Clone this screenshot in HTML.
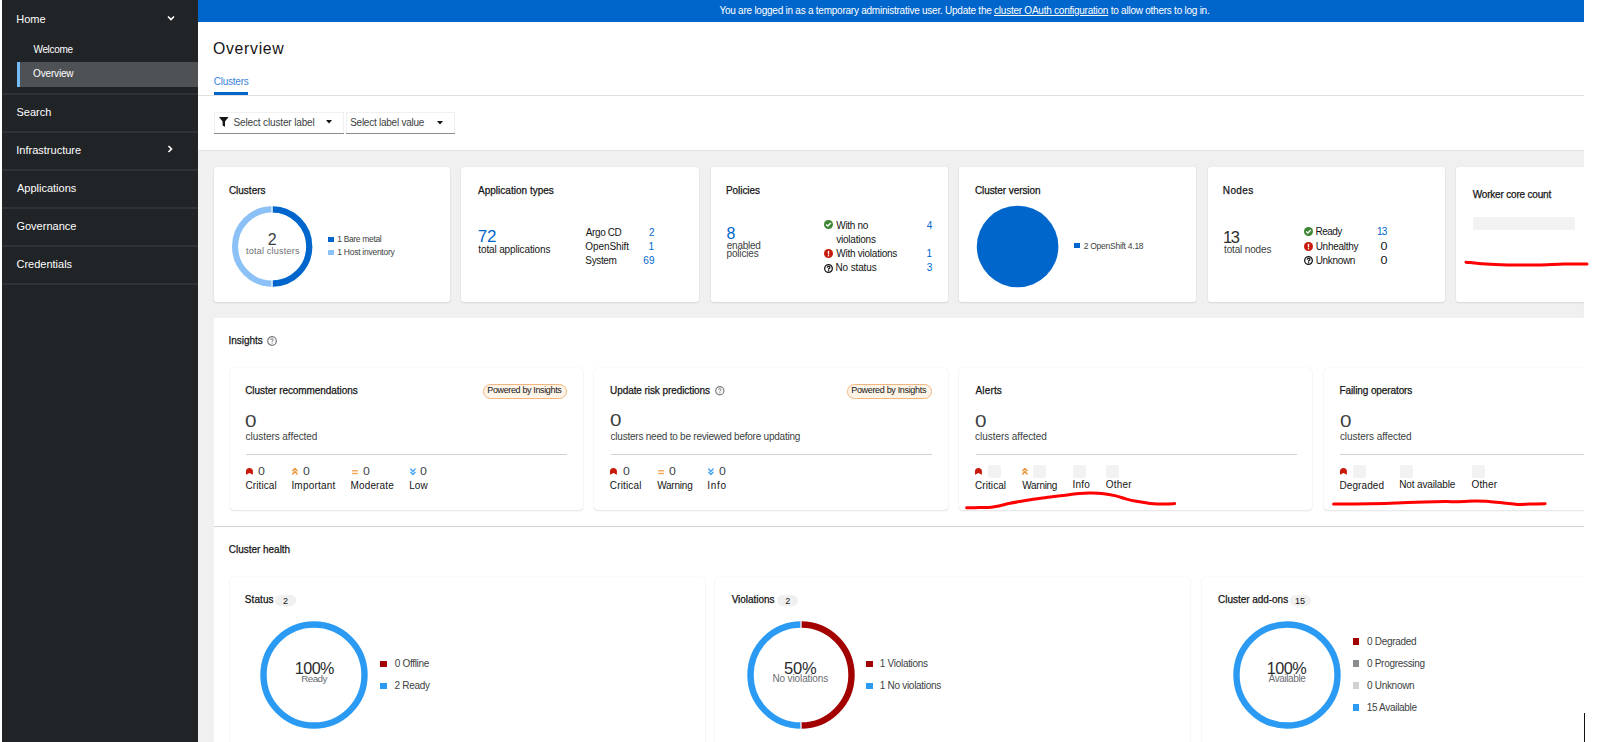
<!DOCTYPE html>
<html><head><meta charset="utf-8">
<style>
*{box-sizing:border-box;margin:0;padding:0}
html,body{width:1598px;height:742px;overflow:hidden;background:#fff}
body{position:relative;font-family:"Liberation Sans",sans-serif;color:#151515}
.a{position:absolute}
.t{position:absolute;white-space:nowrap;line-height:20px}
</style></head><body>
<div class="a" style="left:2px;top:0px;width:196.00px;height:742.00px;background:#212427;"></div>
<div class="a" style="left:17px;top:62px;width:181.00px;height:25.40px;background:#4f5255;"></div>
<div class="a" style="left:17px;top:62px;width:3.00px;height:25.40px;background:#73bcf7;"></div>
<div class="a" style="left:2px;top:92.5px;width:196.00px;height:2.00px;background:#2e3135;"></div>
<div class="a" style="left:2px;top:130.5px;width:196.00px;height:2.00px;background:#2e3135;"></div>
<div class="a" style="left:2px;top:168.5px;width:196.00px;height:2.00px;background:#2e3135;"></div>
<div class="a" style="left:2px;top:206.5px;width:196.00px;height:2.00px;background:#2e3135;"></div>
<div class="a" style="left:2px;top:244.5px;width:196.00px;height:2.00px;background:#2e3135;"></div>
<div class="a" style="left:2px;top:282.5px;width:196.00px;height:2.00px;background:#2e3135;"></div>
<div class="t" style="left:16.30px;top:9.29px;font-size:11px;letter-spacing:0.000px;color:#fff;">Home</div>
<svg class="a" style="left:166.5px;top:15px" width="8" height="7" viewBox="0 0 8 7"><path d="M1 1.5 L4 4.5 L7 1.5" stroke="#fff" stroke-width="1.6" fill="none"/></svg>
<div class="t" style="left:33.45px;top:40.04px;font-size:10px;letter-spacing:-0.317px;color:#fff;">Welcome</div>
<div class="t" style="left:33.05px;top:64.14px;font-size:10px;letter-spacing:-0.164px;color:#fff;">Overview</div>
<div class="t" style="left:16.50px;top:102.19px;font-size:11px;letter-spacing:0.000px;color:#fff;">Search</div>
<div class="t" style="left:16.30px;top:139.89px;font-size:11px;letter-spacing:0.000px;color:#fff;">Infrastructure</div>
<svg class="a" style="left:167px;top:145px" width="7" height="8" viewBox="0 0 7 8"><path d="M1.5 1 L4.5 4 L1.5 7" stroke="#fff" stroke-width="1.6" fill="none"/></svg>
<div class="t" style="left:16.95px;top:177.79px;font-size:11px;letter-spacing:0.000px;color:#fff;">Applications</div>
<div class="t" style="left:16.45px;top:215.99px;font-size:11px;letter-spacing:0.000px;color:#fff;">Governance</div>
<div class="t" style="left:16.45px;top:253.59px;font-size:11px;letter-spacing:0.000px;color:#fff;">Credentials</div>
<div class="a" style="left:198px;top:0px;width:1386.00px;height:21.50px;background:#0066cc;"></div>
<div class="t" style="left:719.45px;top:0.74px;font-size:10px;letter-spacing:-0.242px;color:#fff;">You are logged in as a temporary administrative user. Update the <u>cluster OAuth configuration</u> to allow others to log in.</div>
<div class="t" style="left:213.05px;top:39.03px;font-size:15.8px;letter-spacing:0.693px;color:#151515;">Overview</div>
<div class="t" style="left:213.70px;top:71.84px;font-size:10px;letter-spacing:-0.221px;color:#3b82dc;">Clusters</div>
<div class="a" style="left:214px;top:92.4px;width:34.00px;height:2.40px;background:#0066cc;"></div>
<div class="a" style="left:198px;top:94.8px;width:1386.00px;height:1.20px;background:#e0e0e0;"></div>
<div class="a" style="left:214px;top:112px;width:130.40px;height:21.00px;background:#fff;box-shadow:inset 0 1px 0 #f0f0f0,inset 1px 0 0 #f0f0f0,inset -1px 0 0 #f0f0f0"></div>
<div class="a" style="left:214px;top:133px;width:130.40px;height:1.00px;background:#8a8d90;"></div>
<div class="a" style="left:345.5px;top:112px;width:109.20px;height:21.00px;background:#fff;box-shadow:inset 0 1px 0 #f0f0f0,inset 1px 0 0 #f0f0f0,inset -1px 0 0 #f0f0f0"></div>
<div class="a" style="left:345.5px;top:133px;width:109.20px;height:1.00px;background:#8a8d90;"></div>
<svg class="a" style="left:219px;top:117px" width="10" height="10" viewBox="0 0 10 10"><path d="M0 0 H9.6 L6 4.6 V9.8 L3.6 8.6 V4.6 Z" fill="#151515"/></svg>
<div class="t" style="left:233.55px;top:112.94px;font-size:10px;letter-spacing:-0.147px;color:#3c3f42;">Select cluster label</div>
<svg class="a" style="left:326px;top:120.2px" width="6" height="4" viewBox="0 0 6 4"><path d="M0 0 H6 L3 3.6 Z" fill="#151515"/></svg>
<div class="t" style="left:350.15px;top:112.94px;font-size:10px;letter-spacing:-0.244px;color:#3c3f42;">Select label value</div>
<svg class="a" style="left:437.2px;top:120.5px" width="6" height="4" viewBox="0 0 6 4"><path d="M0 0 H6 L3 3.6 Z" fill="#151515"/></svg>
<div class="a" style="left:198px;top:150.2px;width:1386.00px;height:591.80px;background:#f0f0f0;box-shadow:inset 0 1px 1px rgba(0,0,0,.05)"></div>
<div class="a" style="left:214px;top:167px;width:236.40px;height:135.00px;background:#fff;border-radius:3px;box-shadow:0 1px 2px rgba(3,3,3,.10),0 0 2px rgba(3,3,3,.06)"></div>
<div class="a" style="left:461.2px;top:167px;width:237.80px;height:135.00px;background:#fff;border-radius:3px;box-shadow:0 1px 2px rgba(3,3,3,.10),0 0 2px rgba(3,3,3,.06)"></div>
<div class="a" style="left:710.7px;top:167px;width:237.10px;height:135.00px;background:#fff;border-radius:3px;box-shadow:0 1px 2px rgba(3,3,3,.10),0 0 2px rgba(3,3,3,.06)"></div>
<div class="a" style="left:959px;top:167px;width:237.00px;height:135.00px;background:#fff;border-radius:3px;box-shadow:0 1px 2px rgba(3,3,3,.10),0 0 2px rgba(3,3,3,.06)"></div>
<div class="a" style="left:1207.5px;top:167px;width:237.50px;height:135.00px;background:#fff;border-radius:3px;box-shadow:0 1px 2px rgba(3,3,3,.10),0 0 2px rgba(3,3,3,.06)"></div>
<div class="a" style="left:1456px;top:167px;width:244.00px;height:135.00px;background:#fff;border-radius:3px;box-shadow:0 1px 2px rgba(3,3,3,.10),0 0 2px rgba(3,3,3,.06)"></div>
<div class="t" style="left:228.90px;top:180.63px;font-size:10px;letter-spacing:-0.007px;color:#151515;-webkit-text-stroke:0.25px currentColor;">Clusters</div>
<svg class="a" style="left:231px;top:205px" width="82" height="84" viewBox="231 205 82 84"><circle cx="272.15" cy="246.5" r="37.1" fill="none" stroke="#8bc1f7" stroke-width="6.1"/><path d="M272.15 209.4 A37.1 37.1 0 0 1 272.15 283.6" fill="none" stroke="#0066cc" stroke-width="6.1"/><rect x="271.5" y="205" width="1.2" height="84" fill="#fff"/></svg>
<div class="t" style="left:267.75px;top:230.36px;font-size:16px;letter-spacing:0.000px;color:#3c3f42;">2</div>
<div class="t" style="left:246.05px;top:241.48px;font-size:9px;letter-spacing:0.219px;color:#6a6e73;">total clusters</div>
<div class="a" style="left:328.1px;top:236.5px;width:5.50px;height:5.50px;background:#0066cc;"></div>
<div class="a" style="left:328.1px;top:249.5px;width:5.50px;height:5.30px;background:#8bc1f7;"></div>
<div class="t" style="left:337.25px;top:229.25px;font-size:8.5px;letter-spacing:-0.341px;color:#3c3f42;">1 Bare metal</div>
<div class="t" style="left:337.25px;top:242.25px;font-size:8.5px;letter-spacing:-0.263px;color:#3c3f42;">1 Host inventory</div>
<div class="t" style="left:478.00px;top:180.63px;font-size:10px;letter-spacing:0.016px;color:#151515;-webkit-text-stroke:0.25px currentColor;">Application types</div>
<div class="t" style="left:477.65px;top:227.31px;font-size:17px;letter-spacing:-0.000px;color:#0066cc;">72</div>
<div class="t" style="left:478.35px;top:240.44px;font-size:10px;letter-spacing:-0.141px;color:#151515;">total applications</div>
<div class="t" style="left:585.80px;top:222.53px;font-size:10px;letter-spacing:-0.408px;color:#151515;">Argo CD</div>
<div class="t" style="left:585.35px;top:236.74px;font-size:10px;letter-spacing:-0.094px;color:#151515;">OpenShift</div>
<div class="t" style="left:585.35px;top:250.94px;font-size:10px;letter-spacing:-0.370px;color:#151515;">System</div>
<div class="t" style="left:648.95px;top:222.53px;font-size:10px;letter-spacing:0.000px;color:#0066cc;">2</div>
<div class="t" style="left:648.40px;top:236.74px;font-size:10px;letter-spacing:0.000px;color:#0066cc;">1</div>
<div class="t" style="left:643.35px;top:250.94px;font-size:10px;letter-spacing:0.000px;color:#0066cc;">69</div>
<div class="t" style="left:725.90px;top:180.63px;font-size:10px;letter-spacing:-0.043px;color:#151515;-webkit-text-stroke:0.25px currentColor;">Policies</div>
<div class="t" style="left:726.50px;top:223.66px;font-size:16px;letter-spacing:0.000px;color:#0066cc;">8</div>
<div class="t" style="left:726.80px;top:235.94px;font-size:10px;letter-spacing:-0.258px;color:#3c3f42;">enabled</div>
<div class="t" style="left:726.55px;top:244.44px;font-size:10px;letter-spacing:-0.179px;color:#3c3f42;">policies</div>
<svg class="a" style="left:823.9px;top:220.3px" width="9" height="9" viewBox="0 0 9 9"><circle cx="4.5" cy="4.5" r="4.5" fill="#3e8635"/><path d="M2.2 4.6 L3.8 6.1 L6.8 3.0" stroke="#fff" stroke-width="1.4" fill="none"/></svg>
<svg class="a" style="left:823.9px;top:249.2px" width="9" height="9" viewBox="0 0 9 9"><circle cx="4.5" cy="4.5" r="4.5" fill="#c9190b"/><rect x="3.85" y="1.7" width="1.3" height="3.7" rx=".5" fill="#fff"/><rect x="3.85" y="6.1" width="1.3" height="1.3" fill="#fff"/></svg>
<svg class="a" style="left:823.9px;top:263.7px" width="9" height="9" viewBox="0 0 9 9"><circle cx="4.5" cy="4.5" r="3.85" fill="none" stroke="#151515" stroke-width="1.3"/><path d="M3.1 3.7 Q3.2 2.3 4.5 2.3 Q5.9 2.3 5.9 3.5 Q5.9 4.4 4.6 4.9 V5.7" stroke="#151515" stroke-width="1.2" fill="none"/><rect x="3.95" y="6.1" width="1.2" height="1.2" fill="#151515"/></svg>
<div class="t" style="left:836.25px;top:216.24px;font-size:10px;letter-spacing:-0.292px;color:#151515;">With no</div>
<div class="t" style="left:836.25px;top:229.74px;font-size:10px;letter-spacing:-0.222px;color:#151515;">violations</div>
<div class="t" style="left:836.25px;top:244.44px;font-size:10px;letter-spacing:-0.246px;color:#151515;">With violations</div>
<div class="t" style="left:835.50px;top:258.24px;font-size:10px;letter-spacing:-0.138px;color:#151515;">No status</div>
<div class="t" style="left:926.75px;top:216.24px;font-size:10px;letter-spacing:0.000px;color:#0066cc;">4</div>
<div class="t" style="left:926.40px;top:244.44px;font-size:10px;letter-spacing:0.000px;color:#0066cc;">1</div>
<div class="t" style="left:926.85px;top:258.24px;font-size:10px;letter-spacing:0.000px;color:#0066cc;">3</div>
<div class="t" style="left:974.90px;top:180.63px;font-size:10px;letter-spacing:-0.075px;color:#151515;-webkit-text-stroke:0.25px currentColor;">Cluster version</div>
<svg class="a" style="left:976px;top:205px" width="84" height="84" viewBox="976 205 84 84"><circle cx="1017.6" cy="246.5" r="40.8" fill="#0066cc"/></svg>
<div class="a" style="left:1074.1px;top:242.5px;width:5.60px;height:5.60px;background:#0066cc;"></div>
<div class="t" style="left:1083.70px;top:235.55px;font-size:8.5px;letter-spacing:-0.260px;color:#3c3f42;">2 OpenShift 4.18</div>
<div class="t" style="left:1222.80px;top:180.63px;font-size:10px;letter-spacing:0.363px;color:#151515;-webkit-text-stroke:0.25px currentColor;">Nodes</div>
<div class="t" style="left:1222.95px;top:226.98px;font-size:16.5px;letter-spacing:0.000px;color:#2a2c2e;letter-spacing:-1.4px">13</div>
<div class="t" style="left:1224.05px;top:240.13px;font-size:10px;letter-spacing:-0.155px;color:#3c3f42;">total nodes</div>
<svg class="a" style="left:1304px;top:227.3px" width="9" height="9" viewBox="0 0 9 9"><circle cx="4.5" cy="4.5" r="4.5" fill="#3e8635"/><path d="M2.2 4.6 L3.8 6.1 L6.8 3.0" stroke="#fff" stroke-width="1.4" fill="none"/></svg>
<svg class="a" style="left:1304px;top:242px" width="9" height="9" viewBox="0 0 9 9"><circle cx="4.5" cy="4.5" r="4.5" fill="#c9190b"/><rect x="3.85" y="1.7" width="1.3" height="3.7" rx=".5" fill="#fff"/><rect x="3.85" y="6.1" width="1.3" height="1.3" fill="#fff"/></svg>
<svg class="a" style="left:1304px;top:256.3px" width="9" height="9" viewBox="0 0 9 9"><circle cx="4.5" cy="4.5" r="3.85" fill="none" stroke="#151515" stroke-width="1.3"/><path d="M3.1 3.7 Q3.2 2.3 4.5 2.3 Q5.9 2.3 5.9 3.5 Q5.9 4.4 4.6 4.9 V5.7" stroke="#151515" stroke-width="1.2" fill="none"/><rect x="3.95" y="6.1" width="1.2" height="1.2" fill="#151515"/></svg>
<div class="t" style="left:1315.60px;top:222.13px;font-size:10px;letter-spacing:-0.550px;color:#151515;">Ready</div>
<div class="t" style="left:1315.65px;top:236.74px;font-size:10px;letter-spacing:-0.263px;color:#151515;">Unhealthy</div>
<div class="t" style="left:1315.65px;top:251.13px;font-size:10px;letter-spacing:-0.333px;color:#151515;">Unknown</div>
<div class="t" style="left:1376.90px;top:222.13px;font-size:10px;letter-spacing:0.000px;color:#0066cc;letter-spacing:-0.8px">13</div>
<div class="t" style="left:1381.60px;top:236.74px;font-size:10px;letter-spacing:0.000px;color:#151515;transform:scaleX(1.25);transform-origin:100% 0;">0</div>
<div class="t" style="left:1381.60px;top:251.13px;font-size:10px;letter-spacing:0.000px;color:#151515;transform:scaleX(1.25);transform-origin:100% 0;">0</div>
<div class="t" style="left:1472.75px;top:184.63px;font-size:10px;letter-spacing:-0.194px;color:#151515;-webkit-text-stroke:0.25px currentColor;">Worker core count</div>
<div class="a" style="left:1472.8px;top:216.7px;width:102.10px;height:13.80px;background:#f2f2f2;border-radius:2px"></div>
<div class="a" style="left:213.5px;top:318px;width:1370.50px;height:424.00px;background:#fff;"></div>
<div class="t" style="left:228.40px;top:331.44px;font-size:10px;letter-spacing:-0.000px;color:#151515;-webkit-text-stroke:0.25px currentColor;">Insights</div>
<svg class="a" style="left:267.3px;top:336px" width="10" height="10" viewBox="0 0 10 10"><circle cx="5" cy="5" r="4.3" fill="none" stroke="#7a7d81" stroke-width="1.2"/><path d="M3.7 4 Q3.7 2.7 5 2.7 Q6.3 2.7 6.3 3.8 Q6.3 4.6 5.1 5.1 V5.8" stroke="#7a7d81" stroke-width="1" fill="none"/><rect x="4.55" y="6.5" width="1.1" height="1.1" fill="#7a7d81"/></svg>
<div class="a" style="left:230px;top:367.5px;width:352.80px;height:142.50px;background:#fff;border-radius:4px;box-shadow:0 1px 2px rgba(3,3,3,.10),0 0 1.5px rgba(3,3,3,.08)"></div>
<div class="a" style="left:594px;top:367.5px;width:353.50px;height:142.50px;background:#fff;border-radius:4px;box-shadow:0 1px 2px rgba(3,3,3,.10),0 0 1.5px rgba(3,3,3,.08)"></div>
<div class="a" style="left:959px;top:367.5px;width:353.30px;height:142.50px;background:#fff;border-radius:4px;box-shadow:0 1px 2px rgba(3,3,3,.10),0 0 1.5px rgba(3,3,3,.08)"></div>
<div class="a" style="left:1324px;top:367.5px;width:376.00px;height:142.50px;background:#fff;border-radius:4px;box-shadow:0 1px 2px rgba(3,3,3,.10),0 0 1.5px rgba(3,3,3,.08)"></div>
<div class="t" style="left:245.20px;top:381.44px;font-size:10px;letter-spacing:-0.064px;color:#151515;-webkit-text-stroke:0.25px currentColor;">Cluster recommendations</div>
<div class="a" style="left:483px;top:383.9px;width:84.4px;height:15px;border:1px solid #f4c145;border-color:#f3b57e;background:#fff4e8;border-radius:8px"></div>
<div class="t" style="left:487.25px;top:380.48px;font-size:9px;letter-spacing:-0.361px;color:#151515;">Powered by Insights</div>
<div class="t" style="left:245.35px;top:410.68px;font-size:16.5px;letter-spacing:0.000px;color:#3c3f42;transform:scaleX(1.25);transform-origin:0 0;">0</div>
<div class="t" style="left:245.60px;top:427.33px;font-size:10px;letter-spacing:-0.053px;color:#3c3f42;">clusters affected</div>
<div class="a" style="left:246px;top:454px;width:321.40px;height:1.00px;background:#d2d2d2;"></div>
<svg class="a" style="left:246px;top:468.1px" width="7" height="7" viewBox="0 0 7 7"><path d="M0 6.8 V3 Q0.2 0.4 3.4 0 Q6.8 0.4 6.9 3 V6.8 L3.45 5.1 Z" fill="#c9190b"/></svg>
<svg class="a" style="left:292.3px;top:467px" width="6" height="8" viewBox="0 0 6 8"><path d="M0.75 3.7 L2.9 1.4 L5.05 3.7 M0.75 6.9 L2.9 4.6 L5.05 6.9" stroke="#ef9234" stroke-width="1.45" fill="none" stroke-linecap="round" stroke-linejoin="round"/></svg>
<svg class="a" style="left:352px;top:469.5px" width="6" height="5" viewBox="0 0 6 5"><rect x="0" y="0" width="6" height="1.6" rx=".4" fill="#f4ae62"/><rect x="0" y="2.7" width="6" height="1.6" rx=".4" fill="#f4ae62"/></svg>
<svg class="a" style="left:410px;top:467.6px" width="6" height="8" viewBox="0 0 6 8"><path d="M0.75 1.1 L2.9 3.4 L5.05 1.1 M0.75 4.3 L2.9 6.6 L5.05 4.3" stroke="#4aa6f4" stroke-width="1.45" fill="none" stroke-linecap="round" stroke-linejoin="round"/></svg>
<div class="t" style="left:257.50px;top:461.49px;font-size:11px;letter-spacing:0.000px;color:#3c3f42;transform:scaleX(1.12);transform-origin:0 0;">0</div>
<div class="t" style="left:303.40px;top:461.49px;font-size:11px;letter-spacing:0.000px;color:#3c3f42;transform:scaleX(1.12);transform-origin:0 0;">0</div>
<div class="t" style="left:363.30px;top:461.49px;font-size:11px;letter-spacing:0.000px;color:#3c3f42;transform:scaleX(1.12);transform-origin:0 0;">0</div>
<div class="t" style="left:420.20px;top:461.49px;font-size:11px;letter-spacing:0.000px;color:#3c3f42;transform:scaleX(1.12);transform-origin:0 0;">0</div>
<div class="t" style="left:245.50px;top:475.94px;font-size:10px;letter-spacing:0.086px;color:#151515;">Critical</div>
<div class="t" style="left:291.40px;top:475.94px;font-size:10px;letter-spacing:0.194px;color:#151515;">Important</div>
<div class="t" style="left:350.60px;top:475.94px;font-size:10px;letter-spacing:0.129px;color:#151515;">Moderate</div>
<div class="t" style="left:409.20px;top:475.94px;font-size:10px;letter-spacing:0.075px;color:#151515;">Low</div>
<div class="t" style="left:610.05px;top:381.44px;font-size:10px;letter-spacing:-0.077px;color:#151515;-webkit-text-stroke:0.25px currentColor;">Update risk predictions</div>
<svg class="a" style="left:715.4px;top:386.2px" width="9.6" height="9.6" viewBox="0 0 10 10"><circle cx="5" cy="5" r="4.3" fill="none" stroke="#7a7d81" stroke-width="1.2"/><path d="M3.7 4 Q3.7 2.7 5 2.7 Q6.3 2.7 6.3 3.8 Q6.3 4.6 5.1 5.1 V5.8" stroke="#7a7d81" stroke-width="1" fill="none"/><rect x="4.55" y="6.5" width="1.1" height="1.1" fill="#7a7d81"/></svg>
<div class="a" style="left:847px;top:383.9px;width:85.0px;height:15px;border:1px solid #f4c145;border-color:#f3b57e;background:#fff4e8;border-radius:8px"></div>
<div class="t" style="left:851.25px;top:380.48px;font-size:9px;letter-spacing:-0.328px;color:#151515;">Powered by Insights</div>
<div class="t" style="left:610.35px;top:409.98px;font-size:16.5px;letter-spacing:0.000px;color:#3c3f42;transform:scaleX(1.25);transform-origin:0 0;">0</div>
<div class="t" style="left:610.60px;top:427.33px;font-size:10px;letter-spacing:-0.228px;color:#3c3f42;">clusters need to be reviewed before updating</div>
<div class="a" style="left:610.5px;top:454px;width:321.50px;height:1.00px;background:#d2d2d2;"></div>
<svg class="a" style="left:610.3px;top:468.1px" width="7" height="7" viewBox="0 0 7 7"><path d="M0 6.8 V3 Q0.2 0.4 3.4 0 Q6.8 0.4 6.9 3 V6.8 L3.45 5.1 Z" fill="#c9190b"/></svg>
<svg class="a" style="left:657.6px;top:469.5px" width="6" height="5" viewBox="0 0 6 5"><rect x="0" y="0" width="6" height="1.6" rx=".4" fill="#f4ae62"/><rect x="0" y="2.7" width="6" height="1.6" rx=".4" fill="#f4ae62"/></svg>
<svg class="a" style="left:708.2px;top:467.6px" width="6" height="8" viewBox="0 0 6 8"><path d="M0.75 1.1 L2.9 3.4 L5.05 1.1 M0.75 4.3 L2.9 6.6 L5.05 4.3" stroke="#4aa6f4" stroke-width="1.45" fill="none" stroke-linecap="round" stroke-linejoin="round"/></svg>
<div class="t" style="left:622.60px;top:461.49px;font-size:11px;letter-spacing:0.000px;color:#3c3f42;transform:scaleX(1.12);transform-origin:0 0;">0</div>
<div class="t" style="left:668.70px;top:461.49px;font-size:11px;letter-spacing:0.000px;color:#3c3f42;transform:scaleX(1.12);transform-origin:0 0;">0</div>
<div class="t" style="left:719.00px;top:461.49px;font-size:11px;letter-spacing:0.000px;color:#3c3f42;transform:scaleX(1.12);transform-origin:0 0;">0</div>
<div class="t" style="left:609.80px;top:475.94px;font-size:10px;letter-spacing:0.143px;color:#151515;">Critical</div>
<div class="t" style="left:657.15px;top:475.94px;font-size:10px;letter-spacing:-0.208px;color:#151515;">Warning</div>
<div class="t" style="left:707.30px;top:475.94px;font-size:10px;letter-spacing:0.683px;color:#151515;">Info</div>
<div class="t" style="left:975.50px;top:381.44px;font-size:10px;letter-spacing:0.160px;color:#151515;-webkit-text-stroke:0.25px currentColor;">Alerts</div>
<div class="t" style="left:974.85px;top:410.68px;font-size:16.5px;letter-spacing:0.000px;color:#3c3f42;transform:scaleX(1.25);transform-origin:0 0;">0</div>
<div class="t" style="left:975.10px;top:427.33px;font-size:10px;letter-spacing:-0.053px;color:#3c3f42;">clusters affected</div>
<div class="a" style="left:975.5px;top:454px;width:321.50px;height:1.00px;background:#d2d2d2;"></div>
<svg class="a" style="left:975.1px;top:468.2px" width="7" height="7" viewBox="0 0 7 7"><path d="M0 6.8 V3 Q0.2 0.4 3.4 0 Q6.8 0.4 6.9 3 V6.8 L3.45 5.1 Z" fill="#c9190b"/></svg>
<svg class="a" style="left:1021.9px;top:467px" width="6" height="8" viewBox="0 0 6 8"><path d="M0.75 3.7 L2.9 1.4 L5.05 3.7 M0.75 6.9 L2.9 4.6 L5.05 6.9" stroke="#ef9234" stroke-width="1.45" fill="none" stroke-linecap="round" stroke-linejoin="round"/></svg>
<div class="a" style="left:988.2px;top:465.1px;width:12.80px;height:13.30px;background:#f2f2f2;border-radius:2px"></div>
<div class="a" style="left:1032.6px;top:465.1px;width:13.30px;height:13.30px;background:#f2f2f2;border-radius:2px"></div>
<div class="a" style="left:1073.3px;top:465.1px;width:13.00px;height:13.30px;background:#f2f2f2;border-radius:2px"></div>
<div class="a" style="left:1106px;top:465.1px;width:13.00px;height:13.30px;background:#f2f2f2;border-radius:2px"></div>
<div class="t" style="left:975.00px;top:475.74px;font-size:10px;letter-spacing:0.071px;color:#151515;">Critical</div>
<div class="t" style="left:1022.35px;top:475.74px;font-size:10px;letter-spacing:-0.308px;color:#151515;">Warning</div>
<div class="t" style="left:1072.60px;top:474.74px;font-size:10px;letter-spacing:0.217px;color:#151515;">Info</div>
<div class="t" style="left:1105.85px;top:474.74px;font-size:10px;letter-spacing:0.200px;color:#151515;">Other</div>
<div class="t" style="left:1339.50px;top:381.44px;font-size:10px;letter-spacing:-0.103px;color:#151515;-webkit-text-stroke:0.25px currentColor;">Failing operators</div>
<div class="t" style="left:1339.65px;top:410.68px;font-size:16.5px;letter-spacing:0.000px;color:#3c3f42;transform:scaleX(1.25);transform-origin:0 0;">0</div>
<div class="t" style="left:1339.90px;top:427.33px;font-size:10px;letter-spacing:-0.053px;color:#3c3f42;">clusters affected</div>
<div class="a" style="left:1340.3px;top:454px;width:359.70px;height:1.00px;background:#d2d2d2;"></div>
<svg class="a" style="left:1340px;top:468.2px" width="7" height="7" viewBox="0 0 7 7"><path d="M0 6.8 V3 Q0.2 0.4 3.4 0 Q6.8 0.4 6.9 3 V6.8 L3.45 5.1 Z" fill="#c9190b"/></svg>
<div class="a" style="left:1353.2px;top:465.1px;width:12.60px;height:13.30px;background:#f2f2f2;border-radius:2px"></div>
<div class="a" style="left:1399.8px;top:465.1px;width:13.10px;height:13.30px;background:#f2f2f2;border-radius:2px"></div>
<div class="a" style="left:1472px;top:465.1px;width:12.70px;height:13.30px;background:#f2f2f2;border-radius:2px"></div>
<div class="t" style="left:1339.50px;top:475.74px;font-size:10px;letter-spacing:0.079px;color:#151515;">Degraded</div>
<div class="t" style="left:1399.20px;top:474.74px;font-size:10px;letter-spacing:-0.137px;color:#151515;">Not available</div>
<div class="t" style="left:1471.55px;top:474.74px;font-size:10px;letter-spacing:0.125px;color:#151515;">Other</div>
<div class="a" style="left:213.5px;top:526px;width:1370.50px;height:1.00px;background:#d2d2d2;"></div>
<div class="t" style="left:228.80px;top:540.13px;font-size:10px;letter-spacing:-0.027px;color:#151515;-webkit-text-stroke:0.25px currentColor;">Cluster health</div>
<div class="a" style="left:229.6px;top:576.6px;width:475.90px;height:223.40px;background:#fff;border-radius:4px;box-shadow:0 1px 2px rgba(3,3,3,.10),0 0 1.5px rgba(3,3,3,.08)"></div>
<div class="a" style="left:714.8px;top:576.6px;width:475.20px;height:223.40px;background:#fff;border-radius:4px;box-shadow:0 1px 2px rgba(3,3,3,.10),0 0 1.5px rgba(3,3,3,.08)"></div>
<div class="a" style="left:1201.5px;top:576.6px;width:498.50px;height:223.40px;background:#fff;border-radius:4px;box-shadow:0 1px 2px rgba(3,3,3,.10),0 0 1.5px rgba(3,3,3,.08)"></div>
<div class="t" style="left:244.85px;top:589.63px;font-size:10px;letter-spacing:0.070px;color:#151515;-webkit-text-stroke:0.25px currentColor;">Status</div>
<div class="a" style="left:275.2px;top:594.8px;width:20.6px;height:11.7px;background:#f0f0f0;border-radius:6px"></div>
<div class="t" style="left:283.00px;top:591.28px;font-size:9px;letter-spacing:0.000px;color:#151515;">2</div>
<div class="t" style="left:731.65px;top:589.63px;font-size:10px;letter-spacing:-0.033px;color:#151515;-webkit-text-stroke:0.25px currentColor;">Violations</div>
<div class="a" style="left:777.4px;top:594.8px;width:20.9px;height:11.7px;background:#f0f0f0;border-radius:6px"></div>
<div class="t" style="left:785.35px;top:591.28px;font-size:9px;letter-spacing:0.000px;color:#151515;">2</div>
<div class="t" style="left:1218.10px;top:589.63px;font-size:10px;letter-spacing:-0.039px;color:#151515;-webkit-text-stroke:0.25px currentColor;">Cluster add-ons</div>
<div class="a" style="left:1289.6px;top:594.8px;width:21.2px;height:11.7px;background:#f0f0f0;border-radius:6px"></div>
<div class="t" style="left:1295.02px;top:591.28px;font-size:9px;letter-spacing:0.000px;color:#151515;">15</div>
<svg class="a" style="left:258.4px;top:619px" width="112" height="112" viewBox="258.4 619 112 112"><circle cx="314.4" cy="675" r="50.5" fill="none" stroke="#2b9af3" stroke-width="6.4"/></svg>
<div class="t" style="left:294.75px;top:658.19px;font-size:16.2px;letter-spacing:-0.550px;color:#2a2c2e;">100%</div>
<div class="t" style="left:301.20px;top:669.47px;font-size:9.9px;letter-spacing:-0.575px;color:#6a6e73;">Ready</div>
<div class="a" style="left:380.1px;top:660.5px;width:7.00px;height:6.50px;background:#a30000;"></div>
<div class="a" style="left:380.1px;top:682.5px;width:7.00px;height:6.50px;background:#2b9af3;"></div>
<div class="t" style="left:394.70px;top:653.73px;font-size:10px;letter-spacing:0.000px;color:#3c3f42;letter-spacing:-0.3px">0 Offline</div>
<div class="t" style="left:394.60px;top:676.13px;font-size:10px;letter-spacing:0.000px;color:#3c3f42;letter-spacing:-0.3px">2 Ready</div>
<svg class="a" style="left:744.5px;top:619px" width="112" height="112" viewBox="744.5 619 112 112"><path d="M800.5 624.5 A50.5 50.5 0 0 0 800.5 725.5" fill="none" stroke="#2b9af3" stroke-width="6.4"/><path d="M800.5 624.5 A50.5 50.5 0 0 1 800.5 725.5" fill="none" stroke="#a30000" stroke-width="6.4"/><rect x="799.9" y="619" width="1.2" height="112" fill="#fff"/></svg>
<div class="t" style="left:783.95px;top:658.08px;font-size:16.5px;letter-spacing:-0.100px;color:#2a2c2e;">50%</div>
<div class="t" style="left:772.40px;top:669.43px;font-size:10px;letter-spacing:-0.117px;color:#6a6e73;">No violations</div>
<div class="a" style="left:866px;top:660.5px;width:7.00px;height:6.50px;background:#a30000;"></div>
<div class="a" style="left:866px;top:682.5px;width:7.00px;height:6.50px;background:#2b9af3;"></div>
<div class="t" style="left:879.85px;top:653.73px;font-size:10px;letter-spacing:0.000px;color:#3c3f42;letter-spacing:-0.3px">1 Violations</div>
<div class="t" style="left:879.85px;top:676.13px;font-size:10px;letter-spacing:0.000px;color:#3c3f42;letter-spacing:-0.3px">1 No violations</div>
<svg class="a" style="left:1230.7px;top:619px" width="112" height="112" viewBox="1230.7 619 112 112"><circle cx="1286.7" cy="675" r="50.5" fill="none" stroke="#2b9af3" stroke-width="6.4"/></svg>
<div class="t" style="left:1266.65px;top:658.15px;font-size:16.3px;letter-spacing:-0.517px;color:#2a2c2e;">100%</div>
<div class="t" style="left:1268.60px;top:669.43px;font-size:10px;letter-spacing:-0.394px;color:#6a6e73;">Available</div>
<div class="a" style="left:1352.5px;top:638.4px;width:6.80px;height:6.80px;background:#a30000;"></div>
<div class="a" style="left:1352.5px;top:660.0px;width:6.80px;height:6.80px;background:#8a8d90;"></div>
<div class="a" style="left:1352.5px;top:682.4px;width:6.80px;height:6.80px;background:#d2d2d2;"></div>
<div class="a" style="left:1352.5px;top:704.2px;width:6.80px;height:6.80px;background:#2b9af3;"></div>
<div class="t" style="left:1367.00px;top:632.43px;font-size:10px;letter-spacing:0.000px;color:#3c3f42;letter-spacing:-0.3px">0 Degraded</div>
<div class="t" style="left:1367.00px;top:653.93px;font-size:10px;letter-spacing:0.000px;color:#3c3f42;letter-spacing:-0.3px">0 Progressing</div>
<div class="t" style="left:1367.00px;top:676.33px;font-size:10px;letter-spacing:0.000px;color:#3c3f42;letter-spacing:-0.3px">0 Unknown</div>
<div class="t" style="left:1366.65px;top:697.93px;font-size:10px;letter-spacing:0.000px;color:#3c3f42;letter-spacing:-0.3px">15 Available</div>
<div class="a" style="left:1584px;top:0px;width:14.00px;height:742.00px;background:#fff;"></div>
<div class="a" style="left:1584px;top:713px;width:1.20px;height:29.00px;background:#151515;"></div>
<svg class="a" style="left:0;top:0" width="1598" height="742" viewBox="0 0 1598 742"><path d="M1466.0 262.2 C1468.6 262.4 1474.7 263.2 1481.6 263.7 C1488.5 264.2 1498.2 264.8 1507.5 265.0 C1516.8 265.2 1528.4 265.1 1537.7 265.0 C1547.0 264.9 1555.4 264.2 1563.6 264.1 C1571.8 264.0 1583.1 264.1 1587.0 264.1" stroke="#ff0000" stroke-width="3" fill="none" stroke-linecap="round" stroke-linejoin="round"/><path d="M966.6 507.8 C968.7 507.8 974.9 507.7 979.0 507.6 C983.1 507.5 987.8 507.6 991.3 507.3 C994.8 507.0 996.9 506.4 1000.0 505.7 C1003.1 505.0 1006.2 504.1 1010.0 503.3 C1013.8 502.5 1018.4 501.8 1022.6 501.1 C1026.8 500.4 1030.8 499.8 1035.0 499.1 C1039.2 498.5 1043.8 497.7 1047.6 497.2 C1051.4 496.7 1054.7 496.4 1058.0 496.0 C1061.3 495.6 1063.6 495.4 1067.2 495.0 C1070.8 494.6 1075.3 493.7 1079.4 493.4 C1083.5 493.1 1087.5 492.9 1091.6 493.0 C1095.7 493.1 1099.7 493.3 1103.8 493.8 C1107.9 494.3 1112.2 495.0 1116.0 495.9 C1119.8 496.8 1123.2 498.2 1126.6 499.1 C1130.0 500.0 1132.7 500.6 1136.4 501.3 C1140.1 502.0 1145.2 502.8 1148.6 503.2 C1152.0 503.6 1152.4 503.9 1156.7 504.0 C1161.0 504.1 1171.6 503.7 1174.6 503.6" stroke="#ff0000" stroke-width="3" fill="none" stroke-linecap="round" stroke-linejoin="round"/><path d="M1333.6 503.9 C1337.2 503.9 1346.4 504.0 1355.0 503.9 C1363.6 503.8 1376.2 503.7 1385.0 503.5 C1393.8 503.3 1397.6 502.9 1407.6 502.6 C1417.6 502.3 1437.1 501.8 1445.0 501.6 C1452.9 501.5 1450.0 501.8 1455.0 501.7 C1460.0 501.6 1469.7 501.2 1475.3 501.1 C1480.9 501.1 1484.0 501.1 1488.8 501.4 C1493.5 501.7 1499.0 502.4 1503.8 502.9 C1508.5 503.4 1512.9 504.2 1517.3 504.4 C1521.7 504.6 1525.4 504.2 1530.0 504.1 C1534.6 504.0 1542.6 503.8 1545.1 503.7" stroke="#ff0000" stroke-width="3" fill="none" stroke-linecap="round" stroke-linejoin="round"/></svg>
</body></html>
